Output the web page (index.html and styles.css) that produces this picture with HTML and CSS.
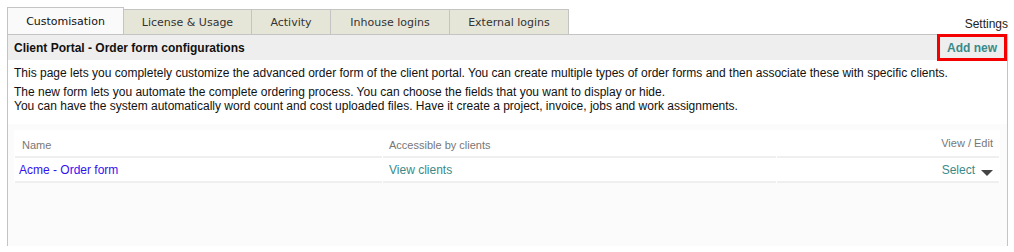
FILE: index.html
```html
<!DOCTYPE html>
<html>
<head>
<meta charset="utf-8">
<link rel="stylesheet" href="styles.css">
</head>
<body>
<div class="page">
  <div class="tabbar">
    <div class="tab active">Customisation</div>
    <div class="tab">License &amp; Usage</div>
    <div class="tab">Activity</div>
    <div class="tab">Inhouse logins</div>
    <div class="tab">External logins</div>
    <div class="settings">Settings</div>
  </div>
  <div class="panel">
    <div class="panel-head">
      <div class="panel-title">Client Portal - Order form configurations</div>
      <a class="add-new">Add new</a>
    </div>
    <div class="intro">
      <p>This page lets you completely customize the advanced order form of the client portal. You can create multiple types of order forms and then associate these with specific clients.</p>
      <p>The new form lets you automate the complete ordering process. You can choose the fields that you want to display or hide.<br>You can have the system automatically word count and cost uploaded files. Have it create a project, invoice, jobs and work assignments.</p>
    </div>
    <div class="list">
      <table class="forms">
        <thead>
          <tr>
            <th class="c-name">Name</th>
            <th class="c-acc">Accessible by clients</th>
            <th class="c-view">View / Edit</th>
          </tr>
        </thead>
        <tbody>
          <tr>
            <td class="c-name"><a class="form-link">Acme - Order form</a></td>
            <td class="c-acc"><a class="teal">View clients</a></td>
            <td class="c-view"><a class="teal">Select</a><span class="caret"></span></td>
          </tr>
        </tbody>
      </table>
    </div>
  </div>
</div>
</body>
</html>
```

FILE: styles.css
```css
html, body {
  margin: 0;
  padding: 0;
  background: #ffffff;
}
.page {
  padding: 7px 6px 0 7px;
  font-family: "Liberation Sans", Arial, sans-serif;
  color: #111;
}
.tabbar {
  display: flex;
  align-items: flex-end;
  height: 27px;
}
.tab {
  box-sizing: border-box;
  height: 25px;
  border: 1px solid #c4c4c4;
  border-bottom: none;
  border-left: none;
  background: #e6e6d8;
  font-family: "DejaVu Sans", Verdana, sans-serif;
  font-size: 11px;
  color: #333;
  display: flex;
  align-items: center;
  justify-content: center;
}
.tab:first-child {
  border-left: 1px solid #c4c4c4;
}
.tab.active {
  height: 27px;
  background: #fafafa;
  color: #111;
  width: 117px;
}
.tab:nth-child(2) { width: 128px; }
.tab:nth-child(3) { width: 79px; }
.tab:nth-child(4) { width: 119px; }
.tab:nth-child(5) { width: 119px; }
.settings {
  margin-left: auto;
  font-size: 12px;
  color: #222;
  padding-bottom: 3px;
}
.panel {
  border: 1px solid #c4c4c4;
  height: 212px;
  box-sizing: border-box;
}
.panel-head {
  display: flex;
  justify-content: space-between;
  align-items: flex-start;
  height: 25px;
  background: #eeeeee;
}
.panel-title {
  font-weight: bold;
  font-size: 12px;
  padding: 6px 0 0 6px;
}
.add-new {
  box-sizing: border-box;
  width: 70px;
  height: 27px;
  border: 3px solid #f40000;
  font-weight: bold;
  font-size: 12px;
  color: #3a8a8a;
  display: flex;
  align-items: center;
  justify-content: center;
  margin-top: -1px;
}
.intro {
  padding: 6px 6px 0 6px;
  font-size: 12px;
  line-height: 14px;
  background: #fff;
  height: 58px;
}
.intro p {
  margin: 0 0 5px 0;
}
.list {
  background: #fbfbfb;
  padding: 6px 6px 0 7px;
  height: 122px;
  box-sizing: border-box;
}
.forms {
  width: 100%;
  border-collapse: separate;
  border-spacing: 1px 0;
  margin-left: -1px;
  background: #fff;
}
.forms th {
  font-weight: normal;
  font-size: 11px;
  color: #777;
  height: 22px;
  padding: 4px 6px 0 6px;
  vertical-align: middle;
  text-align: left;
  border-bottom: 2px solid #efefef;
}
.forms td {
  font-size: 12px;
  height: 23px;
  padding: 0 6px;
  border-bottom: 2px solid #efefef;
  vertical-align: middle;
}
.forms .c-name { width: 354px; padding-left: 7px; }
.forms td.c-name { padding-left: 4px; }
.forms .c-acc { width: 381px; }
.forms .c-view { text-align: right; }
.forms th.c-view { padding-top: 0; }
.form-link { color: #3311ee; }
.teal { color: #3a8a8a; }
.caret {
  display: inline-block;
  width: 0;
  height: 0;
  border-left: 6px solid transparent;
  border-right: 6px solid transparent;
  border-top: 6px solid #444;
  margin-left: 6px;
  vertical-align: -2px;
}
```
